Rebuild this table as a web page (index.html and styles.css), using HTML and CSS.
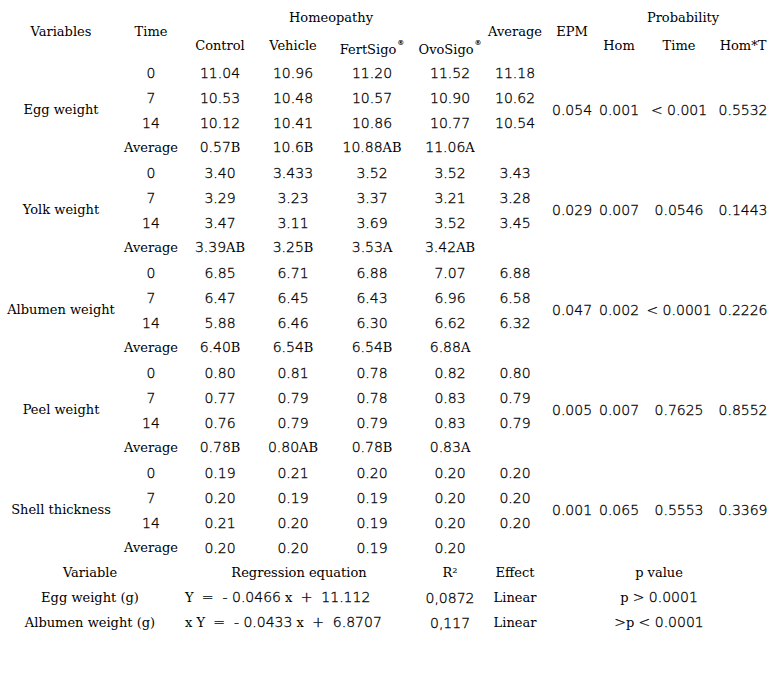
FILE: index.html
```html
<!DOCTYPE html>
<html>
<head>
<meta charset="utf-8">
<link rel="stylesheet" href="styles.css">
</head>
<body>
<table class="t">
  <colgroup>
    <col class="c1"><col class="c2"><col class="c3"><col class="c4"><col class="c5"><col class="c6"><col class="c7"><col class="c8"><col class="c9"><col class="c10"><col class="c11">
  </colgroup>
  <tr class="h1">
    <td rowspan="2">Variables</td>
    <td rowspan="2">Time</td>
    <td colspan="4">Homeopathy</td>
    <td rowspan="2">Average</td>
    <td rowspan="2">EPM</td>
    <td colspan="3">Probability</td>
  </tr>
  <tr class="h2">
    <td>Control</td>
    <td>Vehicle</td>
    <td>FertSigo<span class="reg">®</span></td>
    <td>OvoSigo<span class="reg">®</span></td>
    <td>Hom</td>
    <td>Time</td>
    <td>Hom*T</td>
  </tr>

  <tr><td rowspan="4">Egg weight</td><td class="n">0</td><td class="n">11.04</td><td class="n">10.96</td><td class="n">11.20</td><td class="n">11.52</td><td class="n">11.18</td><td class="n" rowspan="4">0.054</td><td class="n" rowspan="4">0.001</td><td class="n" rowspan="4">&lt; 0.001</td><td class="n" rowspan="4">0.5532</td></tr>
  <tr><td class="n">7</td><td class="n">10.53</td><td class="n">10.48</td><td class="n">10.57</td><td class="n">10.90</td><td class="n">10.62</td></tr>
  <tr><td class="n">14</td><td class="n">10.12</td><td class="n">10.41</td><td class="n">10.86</td><td class="n">10.77</td><td class="n">10.54</td></tr>
  <tr><td>Average</td><td class="n">0.57<span class="s">B</span></td><td class="n">10.6<span class="s">B</span></td><td class="n">10.88<span class="s">AB</span></td><td class="n">11.06<span class="s">A</span></td><td></td></tr>

  <tr><td rowspan="4">Yolk weight</td><td class="n">0</td><td class="n">3.40</td><td class="n">3.433</td><td class="n">3.52</td><td class="n">3.52</td><td class="n">3.43</td><td class="n" rowspan="4">0.029</td><td class="n" rowspan="4">0.007</td><td class="n" rowspan="4">0.0546</td><td class="n" rowspan="4">0.1443</td></tr>
  <tr><td class="n">7</td><td class="n">3.29</td><td class="n">3.23</td><td class="n">3.37</td><td class="n">3.21</td><td class="n">3.28</td></tr>
  <tr><td class="n">14</td><td class="n">3.47</td><td class="n">3.11</td><td class="n">3.69</td><td class="n">3.52</td><td class="n">3.45</td></tr>
  <tr><td>Average</td><td class="n">3.39<span class="s">AB</span></td><td class="n">3.25<span class="s">B</span></td><td class="n">3.53<span class="s">A</span></td><td class="n">3.42<span class="s">AB</span></td><td></td></tr>

  <tr><td rowspan="4">Albumen weight</td><td class="n">0</td><td class="n">6.85</td><td class="n">6.71</td><td class="n">6.88</td><td class="n">7.07</td><td class="n">6.88</td><td class="n" rowspan="4">0.047</td><td class="n" rowspan="4">0.002</td><td class="n" rowspan="4">&lt; 0.0001</td><td class="n" rowspan="4">0.2226</td></tr>
  <tr><td class="n">7</td><td class="n">6.47</td><td class="n">6.45</td><td class="n">6.43</td><td class="n">6.96</td><td class="n">6.58</td></tr>
  <tr><td class="n">14</td><td class="n">5.88</td><td class="n">6.46</td><td class="n">6.30</td><td class="n">6.62</td><td class="n">6.32</td></tr>
  <tr><td>Average</td><td class="n">6.40<span class="s">B</span></td><td class="n">6.54<span class="s">B</span></td><td class="n">6.54<span class="s">B</span></td><td class="n">6.88<span class="s">A</span></td><td></td></tr>

  <tr><td rowspan="4">Peel weight</td><td class="n">0</td><td class="n">0.80</td><td class="n">0.81</td><td class="n">0.78</td><td class="n">0.82</td><td class="n">0.80</td><td class="n" rowspan="4">0.005</td><td class="n" rowspan="4">0.007</td><td class="n" rowspan="4">0.7625</td><td class="n" rowspan="4">0.8552</td></tr>
  <tr><td class="n">7</td><td class="n">0.77</td><td class="n">0.79</td><td class="n">0.78</td><td class="n">0.83</td><td class="n">0.79</td></tr>
  <tr><td class="n">14</td><td class="n">0.76</td><td class="n">0.79</td><td class="n">0.79</td><td class="n">0.83</td><td class="n">0.79</td></tr>
  <tr><td>Average</td><td class="n">0.78<span class="s">B</span></td><td class="n">0.80<span class="s">AB</span></td><td class="n">0.78<span class="s">B</span></td><td class="n">0.83<span class="s">A</span></td><td></td></tr>

  <tr><td rowspan="4">Shell thickness</td><td class="n">0</td><td class="n">0.19</td><td class="n">0.21</td><td class="n">0.20</td><td class="n">0.20</td><td class="n">0.20</td><td class="n" rowspan="4">0.001</td><td class="n" rowspan="4">0.065</td><td class="n" rowspan="4">0.5553</td><td class="n" rowspan="4">0.3369</td></tr>
  <tr><td class="n">7</td><td class="n">0.20</td><td class="n">0.19</td><td class="n">0.19</td><td class="n">0.20</td><td class="n">0.20</td></tr>
  <tr><td class="n">14</td><td class="n">0.21</td><td class="n">0.20</td><td class="n">0.19</td><td class="n">0.20</td><td class="n">0.20</td></tr>
  <tr><td>Average</td><td class="n">0.20</td><td class="n">0.20</td><td class="n">0.19</td><td class="n">0.20</td><td></td></tr>

  <tr><td colspan="2">Variable</td><td colspan="3">Regression equation</td><td>R²</td><td>Effect</td><td colspan="4">p value</td></tr>
  <tr><td colspan="2">Egg weight (g)</td><td colspan="3" class="eq">Y  <span class="n">=  - 0.0466</span> x  <span class="n">+  11.112</span></td><td class="n">0,0872</td><td>Linear</td><td colspan="4">p <span class="n">&gt; 0.0001</span></td></tr>
  <tr><td colspan="2">Albumen weight (g)</td><td colspan="3" class="eq">x Y  <span class="n">=  - 0.0433</span> x  <span class="n">+  6.8707</span></td><td class="n">0,117</td><td>Linear</td><td colspan="4"><span class="n">&gt;</span>p <span class="n">&lt; 0.0001</span></td></tr>
</table>
</body>
</html>
```

FILE: styles.css
```css
html, body {
  margin: 0;
  padding: 0;
  background: #ffffff;
}

body {
  font-family: "DejaVu Serif", serif;
  font-size: 13px;
  color: #000000;
}

.t {
  table-layout: fixed;
  width: 770px;
  border-collapse: collapse;
  border-spacing: 0;
  margin-top: 4px;
}

.t td {
  padding: 0;
  text-align: center;
  vertical-align: middle;
  height: 25px;
  line-height: 16px;
  white-space: nowrap;
}

.c1 { width: 122px; }
.c2 { width: 58px; }
.c3 { width: 80px; }
.c4 { width: 66px; }
.c5 { width: 92px; }
.c6 { width: 64px; }
.c7 { width: 66px; }
.c8 { width: 48px; }
.c9 { width: 46px; }
.c10 { width: 74px; }
.c11 { width: 54px; }

.t .h1 td,
.t .h2 td {
  height: 28px;
}

.n {
  font-family: "DejaVu Sans ExtraLight", "DejaVu Sans", sans-serif;
  font-weight: 200;
  font-size: 14px;
  -webkit-text-stroke: 0.3px #000000;
}

.s {
  font-family: "DejaVu Serif", serif;
  font-weight: normal;
  font-size: 13px;
  -webkit-text-stroke: 0;
}

.reg {
  font-family: "DejaVu Sans", sans-serif;
  font-size: 7px;
  font-weight: bold;
  vertical-align: 9px;
  margin-left: 1px;
}

.t td.eq {
  text-align: left;
  padding-left: 5px;
  white-space: pre;
}
```
